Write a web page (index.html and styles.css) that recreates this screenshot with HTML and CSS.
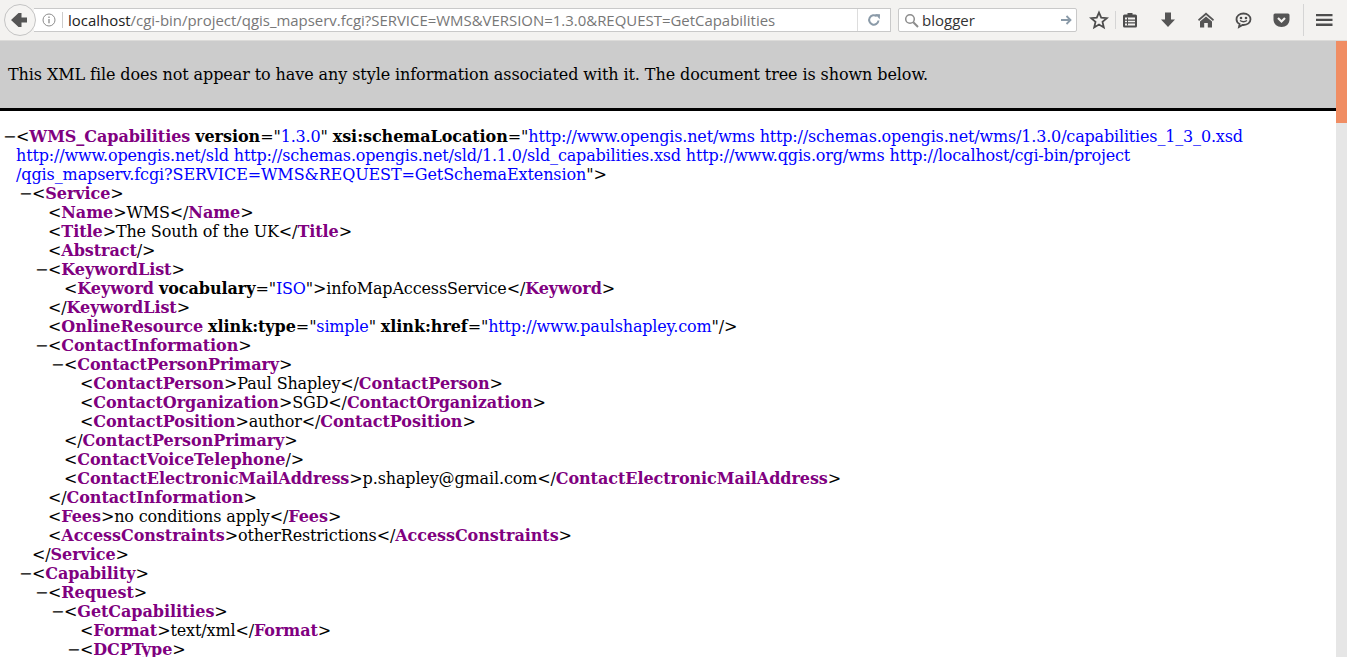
FILE: index.html
```html
<!DOCTYPE html>
<html lang="en">
<head>
<meta charset="utf-8">
<title>qgis_mapserv.fcgi</title>
<link rel="stylesheet" href="styles.css">
</head>
<body>
<header class="toolbar">
  <button class="back" aria-label="Back">
    <svg width="18" height="18" viewBox="0 0 18 18"><path d="M1 9 8.500 2h3V6.500H17V11.500H11.500V16h-3Z" fill="#555"/></svg>
  </button>
  <div class="urlbar">
    <svg class="info" width="14" height="14" viewBox="0 0 14 14"><circle cx="7" cy="7" r="6" fill="none" stroke="#8c8c8c"/><path d="M7 6v4.200M7 3.500v1.400" stroke="#8c8c8c" stroke-width="1.300"/></svg>
    <span class="sep"></span>
    <span class="url"><b>localhost</b>/cgi-bin/project/qgis_mapserv.fcgi?SERVICE=WMS&amp;VERSION=1.3.0&amp;REQUEST=GetCapabilities</span>
    <span class="reload">
      <svg width="14" height="14" viewBox="0 0 14 14"><path d="M11.500 7.500A4.700 4.700 0 1 1 9.800 3.300" fill="none" stroke="#8a9aa8" stroke-width="2"/><path d="M8 1l5 .2-.2 5z" fill="#8a9aa8"/></svg>
    </span>
  </div>
  <div class="searchbar">
    <svg width="15" height="15" viewBox="0 0 15 15"><circle cx="6" cy="6" r="4.300" fill="none" stroke="#8c8c8c" stroke-width="1.500"/><path d="M9.300 9.300 14 14" stroke="#8c8c8c" stroke-width="2"/></svg>
    <span class="query">blogger</span>
    <svg width="12" height="12" viewBox="0 0 12 12"><path d="M1 6h9M6.500 2 10.500 6 6.500 10" fill="none" stroke="#8a9aa8" stroke-width="1.800"/></svg>
  </div>
  <div class="icons">
    <svg class="ic star" width="20" height="20" viewBox="0 0 20 20"><path d="M10 2.500 12.200 7.700 17.800 8.200 13.500 11.900 14.800 17.400 10 14.500 5.200 17.400 6.500 11.900 2.200 8.200 7.800 7.700Z" fill="none" stroke="#4d4d4d" stroke-width="1.800"/></svg>
    <span class="divider"></span>
    <svg class="ic list" width="16" height="18" viewBox="0 0 16 18"><path d="M2.500 3.500H5.500V2H10.500V3.500H13.500Q15 3.500 15 5V15Q15 16.500 13.500 16.500H2.500Q1 16.500 1 15V5Q1 3.500 2.500 3.500Z" fill="#4d4d4d"/><path d="M3 6.500h10v2H3zM3 9.700h10v1.600H3zM3 12.500h10v2H3z" fill="#f3f2f0"/><path d="M5.500 6.500v8" stroke="#4d4d4d"/></svg>
    <svg class="ic down" width="16" height="18" viewBox="0 0 16 18"><path d="M5 1.500H11V8.500H15L8 16 1 8.500H5Z" fill="#555"/></svg>
    <svg class="ic home" width="18" height="18" viewBox="0 0 18 18"><path d="M9 1.500 17 8.500 16 10 9 4 2 10 1 8.500Z" fill="#555"/><path d="M9 5.500 15 10.500V16.500H10.800V12H7.200V16.500H3V10.500Z" fill="#555"/></svg>
    <svg class="ic chat" width="17" height="18" viewBox="0 0 17 18"><path d="M8.500 2.500C12.500 2.500 15.500 5 15.500 8.300S12.500 14 8.500 14L7.500 14 4 16 4.600 13C2.600 12 1.500 10.300 1.500 8.300 1.500 5 4.500 2.500 8.500 2.500Z" fill="none" stroke="#4d4d4d" stroke-width="1.800"/><circle cx="6" cy="7" r="1.300" fill="#4d4d4d"/><circle cx="11" cy="7" r="1.300" fill="#4d4d4d"/><path d="M5 9.500Q8.500 12 12 9.500" fill="none" stroke="#4d4d4d" stroke-width="1.300"/></svg>
    <svg class="ic pocket" width="17" height="18" viewBox="0 0 17 18"><path d="M2 2.500H15Q16.500 2.500 16.500 4V8.500C16.500 13 13 16 8.500 16S.500 13 .500 8.500V4Q.500 2.500 2 2.500Z" fill="#555"/><path d="M5 7 8.500 10.500 12 7" fill="none" stroke="#f3f2f0" stroke-width="2.200"/></svg>
    <span class="divider tall"></span>
    <svg class="ic menu" width="17" height="14" viewBox="0 0 17 14"><path d="M0 1h16.500v2.300H0zM0 5.800h16.500v2.300H0zM0 10.600h16.500v2.300H0z" fill="#4d4d4d"/></svg>
  </div>
</header>
<div class="page">
  <main class="doc">
    <div class="notice"><p>This XML file does not appear to have any style information associated with it. The document tree is shown below.</p></div>
    <div class="tree">
      <div class="el">
        <div class="line"><span class="exp">−</span>&lt;<b class="t">WMS_Capabilities</b> <b>version</b>="<span class="v">1.3.0</span>" <b>xsi:schemaLocation</b>="<span class="v">http://www.opengis.net/wms http://schemas.opengis.net/wms/1.3.0/capabilities_1_3_0.xsd<br>http://www.opengis.net/sld http://schemas.opengis.net/sld/1.1.0/sld_capabilities.xsd http://www.qgis.org/wms http://localhost/cgi-bin/project<br><span class="caps">/qgis_mapserv.fcgi?SERVICE=WMS&amp;REQUEST=GetSchemaExtension</span></span>"&gt;</div>
        <div class="el">
          <div class="line"><span class="exp">−</span>&lt;<b class="t">Service</b>&gt;</div>
          <div class="el">
            <div class="line">&lt;<b class="t">Name</b>&gt;WMS&lt;/<b class="t">Name</b>&gt;</div>
            <div class="line">&lt;<b class="t">Title</b>&gt;The South of the UK&lt;/<b class="t">Title</b>&gt;</div>
            <div class="line">&lt;<b class="t">Abstract</b>/&gt;</div>
            <div class="line"><span class="exp">−</span>&lt;<b class="t">KeywordList</b>&gt;</div>
            <div class="el">
              <div class="line">&lt;<b class="t">Keyword</b> <b>vocabulary</b>="<span class="v">ISO</span>"&gt;infoMapAccessService&lt;/<b class="t">Keyword</b>&gt;</div>
            </div>
            <div class="line">&lt;/<b class="t">KeywordList</b>&gt;</div>
            <div class="line">&lt;<b class="t">OnlineResource</b> <b>xlink:type</b>="<span class="v">simple</span>" <b>xlink:href</b>="<span class="v">http://www.paulshapley.com</span>"/&gt;</div>
            <div class="line"><span class="exp">−</span>&lt;<b class="t">ContactInformation</b>&gt;</div>
            <div class="el">
              <div class="line"><span class="exp">−</span>&lt;<b class="t">ContactPersonPrimary</b>&gt;</div>
              <div class="el">
                <div class="line">&lt;<b class="t">ContactPerson</b>&gt;Paul Shapley&lt;/<b class="t">ContactPerson</b>&gt;</div>
                <div class="line">&lt;<b class="t">ContactOrganization</b>&gt;SGD&lt;/<b class="t">ContactOrganization</b>&gt;</div>
                <div class="line">&lt;<b class="t">ContactPosition</b>&gt;author&lt;/<b class="t">ContactPosition</b>&gt;</div>
              </div>
              <div class="line">&lt;/<b class="t">ContactPersonPrimary</b>&gt;</div>
              <div class="line">&lt;<b class="t">ContactVoiceTelephone</b>/&gt;</div>
              <div class="line">&lt;<b class="t">ContactElectronicMailAddress</b>&gt;p.shapley@gmail.com&lt;/<b class="t">ContactElectronicMailAddress</b>&gt;</div>
            </div>
            <div class="line">&lt;/<b class="t">ContactInformation</b>&gt;</div>
            <div class="line">&lt;<b class="t">Fees</b>&gt;no conditions apply&lt;/<b class="t">Fees</b>&gt;</div>
            <div class="line">&lt;<b class="t">AccessConstraints</b>&gt;otherRestrictions&lt;/<b class="t">AccessConstraints</b>&gt;</div>
          </div>
          <div class="line">&lt;/<b class="t">Service</b>&gt;</div>
        </div>
        <div class="el">
          <div class="line"><span class="exp">−</span>&lt;<b class="t">Capability</b>&gt;</div>
          <div class="el">
            <div class="line"><span class="exp">−</span>&lt;<b class="t">Request</b>&gt;</div>
            <div class="el">
              <div class="line"><span class="exp">−</span>&lt;<b class="t">GetCapabilities</b>&gt;</div>
              <div class="el">
                <div class="line">&lt;<b class="t">Format</b>&gt;text/xml&lt;/<b class="t">Format</b>&gt;</div>
                <div class="line"><span class="exp">−</span>&lt;<b class="t">DCPType</b>&gt;</div>
              </div>
            </div>
          </div>
        </div>
      </div>
    </div>
  </main>
  <aside class="scrollbar"><div class="thumb"></div></aside>
</div>
</body>
</html>
```
FILE: styles.css
```css
html, body { margin: 0; padding: 0; height: 657px; overflow: hidden; background: #fff; }
body { display: flex; flex-direction: column; }
svg { display: block; flex: none; }
.toolbar { height: 41px; flex: none; box-sizing: border-box; background: #f3f2f0; border-bottom: 1px solid #dcdbd9; display: flex; align-items: center; padding-left: 4px; font-family: "Open Sans", sans-serif; }
.back { width: 32px; height: 32px; box-sizing: border-box; border-radius: 50%; border: 1px solid #c4c4c4; background: #f5f4f2; padding: 0 0 0 5px; position: relative; z-index: 1; flex: none; }
.urlbar { margin-left: -2px; width: 857px; height: 24px; box-sizing: border-box; background: #fff; border: 1px solid #c9c9c9; border-left: 0; display: flex; align-items: center; padding-left: 8px; }
.sep { width: 1px; height: 16px; background: #ccc; margin: 0 5px 0 6px; }
.url { flex: 1; font-size: 14.950px; color: #777; white-space: nowrap; overflow: hidden; }
.url b { font-weight: 400; color: #222; }
.reload { width: 32px; height: 22px; border-left: 1px solid #ddd; display: flex; align-items: center; justify-content: center; }
.searchbar { margin-left: 7px; width: 179px; height: 24px; box-sizing: border-box; background: #fff; border: 1px solid #c9c9c9; border-radius: 2px; display: flex; align-items: center; padding: 0 4px 0 5px; gap: 3px; }
.query { flex: 1; font-size: 15px; color: #333; }
.icons { display: flex; align-items: center; margin-left: 12px; }
.divider { width: 1px; height: 18px; background: #d5d5d5; margin: 0 6px 0 6px; }
.divider.tall { height: 32px; margin: 0 12px 0 13px; }
.ic.down { margin-left: 22px; }
.ic.home { margin-left: 21px; }
.ic.chat { margin-left: 20px; }
.ic.pocket { margin-left: 21px; }
.page { flex: 1; display: flex; min-height: 0; }
.doc { flex: 1; min-width: 0; overflow: hidden; font-family: "DejaVu Serif", serif; font-size: 16px; line-height: 19px; color: #000; letter-spacing: -0.09px; }
.notice { background: #ccc; border-bottom: 3px solid #000; height: 67px; display: flex; align-items: center; padding-left: 8px; }
.notice p { margin: 0; }
.tree { margin-top: 16px; padding-left: 16px; white-space: nowrap; letter-spacing: -0.14px; }
.el .el { margin-left: 16px; }
.exp { display: inline-block; width: 13px; margin-left: -13px; }
.tree b { letter-spacing: -0.06px; }
.t { color: #800080; }
.v { color: #00f; letter-spacing: -0.17px; }
.caps { letter-spacing: -0.105px; }
.scrollbar { width: 11px; flex: none; background: #e6e6e6; }
.thumb { height: 82px; background: #f08d63; }
```
